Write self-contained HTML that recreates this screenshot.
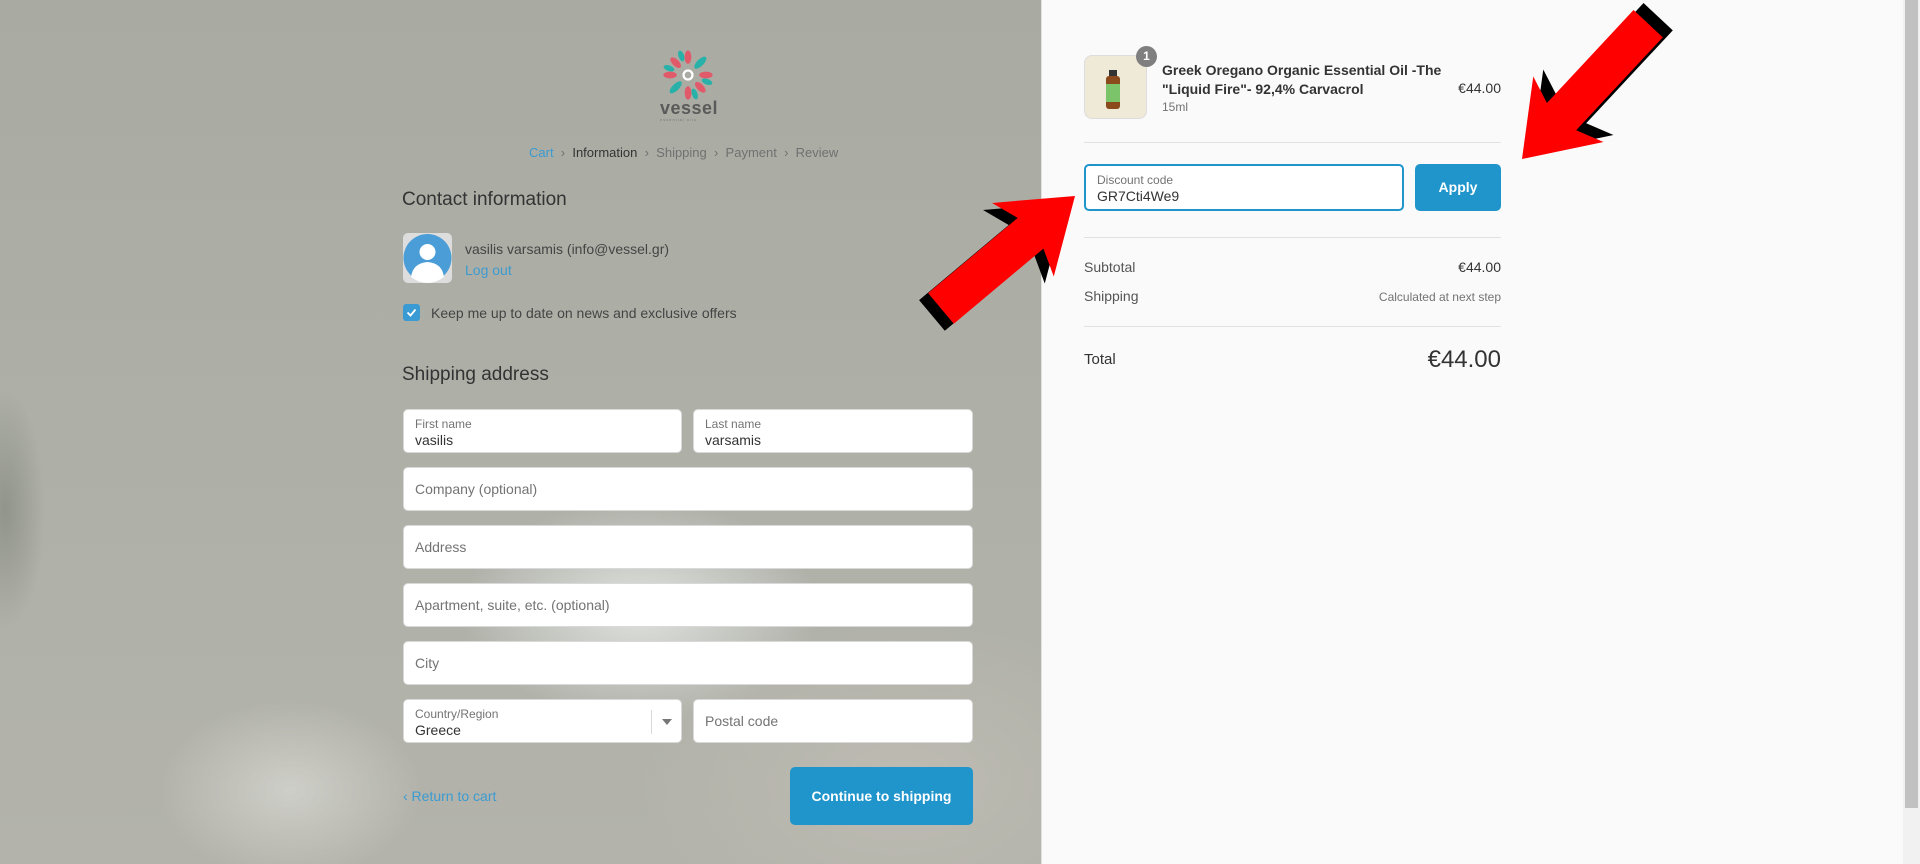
<!DOCTYPE html>
<html><head><meta charset="utf-8"><style>
*{box-sizing:border-box;margin:0;padding:0}
body{width:1920px;height:864px;overflow:hidden;font-family:"Liberation Sans",sans-serif;position:relative;background:#fafafa}
.left{position:absolute;left:0;top:0;width:1041px;height:864px;background:
radial-gradient(ellipse 180px 110px at 640px 610px,rgba(235,238,236,.8),rgba(235,238,236,0)),
radial-gradient(ellipse 130px 90px at 290px 790px,rgba(225,225,220,.6),rgba(225,225,220,0)),
radial-gradient(ellipse 260px 160px at 900px 780px,rgba(200,195,185,.5),rgba(200,195,185,0)),
radial-gradient(ellipse 40px 120px at 5px 510px,rgba(90,95,85,.35),rgba(90,95,85,0)),
linear-gradient(180deg,#a9aba3 0%,#aeb0a8 50%,#b3b3ab 100%)}
.right{position:absolute;left:1041px;top:0;width:862px;height:864px;background:#fafafa;border-left:1px solid #e1e1e1}
.sb{position:absolute;left:1903px;top:0;width:17px;height:864px;background:#f1f1f1}
.sb div{position:absolute;left:2px;top:0;width:13px;height:808px;background:#c1c1c1}
.a{position:absolute;white-space:nowrap}
.f{position:absolute;background:#fff;border:1px solid #d9d9d9;border-radius:5px;height:44px}
.f .l{position:absolute;left:11px;top:7px;font-size:12px;color:#737373}
.f .v{position:absolute;left:11px;top:22px;font-size:14px;color:#333}
.f .p{position:absolute;left:11px;top:13px;font-size:14px;color:#737373}
.hr{position:absolute;left:1084px;width:417px;height:1px;background:#e1e1e1}
</style></head><body>
<div class="left"></div>
<div class="right"></div>
<div class="sb"><div></div></div>

<svg class="a" style="left:660px;top:47px" width="56" height="56" viewBox="-25 -25 50 50">
<g fill="#e05a6a"><ellipse cx="0" cy="-16" rx="3" ry="6"/><ellipse cx="0" cy="16" rx="3" ry="6"/><ellipse cx="-16" cy="0" rx="6" ry="3"/><ellipse cx="16" cy="0" rx="6" ry="3"/>
<ellipse cx="-11" cy="-11" rx="3" ry="6" transform="rotate(-45 -11 -11)"/><ellipse cx="11" cy="11" rx="3" ry="6" transform="rotate(-45 11 11)"/></g>
<g fill="#27b1a8"><ellipse cx="11" cy="-11" rx="3" ry="7" transform="rotate(45 11 -11)"/><ellipse cx="-11" cy="11" rx="3" ry="7" transform="rotate(45 -11 11)"/>
<ellipse cx="-6" cy="-17" rx="2.5" ry="5" transform="rotate(-20 -6 -17)"/><ellipse cx="6" cy="17" rx="2.5" ry="5" transform="rotate(-20 6 17)"/>
<ellipse cx="17" cy="6" rx="5" ry="2.5" transform="rotate(20 17 6)"/><ellipse cx="-17" cy="-6" rx="5" ry="2.5" transform="rotate(20 -17 -6)"/></g>
<circle r="4" fill="none" stroke="#fff" stroke-width="2"/></svg>
<div class="a" style="left:660px;top:98px;font-size:18px;font-weight:bold;color:#5a5a5a;letter-spacing:.5px">vessel</div>
<div class="a" style="left:660px;top:117px;font-size:4px;color:#777;letter-spacing:1px">essential oils</div>

<div class="a" style="left:529px;top:145px;font-size:13px;color:#707070">
<span style="color:#3b9bd0">Cart</span> &nbsp;›&nbsp; <span style="color:#333">Information</span> &nbsp;›&nbsp; Shipping &nbsp;›&nbsp; Payment &nbsp;›&nbsp; Review</div>

<div class="a" style="left:402px;top:189px;font-size:19px;color:#333">Contact information</div>
<div class="a" style="left:403px;top:233px;width:49px;height:50px;border-radius:5px;background:#ddd;overflow:hidden">
<svg width="49" height="50" viewBox="0 0 49 50"><circle cx="24.5" cy="25" r="24" fill="#4a9dd6"/><circle cx="24.5" cy="19" r="8" fill="#fff"/><path d="M8 44 Q10 30 24.5 29 Q39 30 41 44 Q33 50 24.5 50 Q16 50 8 44Z" fill="#fff"/></svg></div>
<div class="a" style="left:465px;top:241px;font-size:14px;color:#444">vasilis varsamis (info@vessel.gr)</div>
<div class="a" style="left:465px;top:262px;font-size:14px;color:#3b9bd0">Log out</div>
<div class="a" style="left:403px;top:304px;width:17px;height:17px;border-radius:3px;background:#3a9ad3"><svg width="17" height="17"><path d="M4.5 8.5 L7.5 11.5 L12.5 5.5" stroke="#fff" stroke-width="1.8" fill="none"/></svg></div>
<div class="a" style="left:431px;top:305px;font-size:14px;color:#444">Keep me up to date on news and exclusive offers</div>

<div class="a" style="left:402px;top:364px;font-size:19px;color:#333">Shipping address</div>
<div class="f" style="left:403px;top:409px;width:279px"><div class="l">First name</div><div class="v">vasilis</div></div>
<div class="f" style="left:693px;top:409px;width:280px"><div class="l">Last name</div><div class="v">varsamis</div></div>
<div class="f" style="left:403px;top:467px;width:570px"><div class="p">Company (optional)</div></div>
<div class="f" style="left:403px;top:525px;width:570px"><div class="p">Address</div></div>
<div class="f" style="left:403px;top:583px;width:570px"><div class="p">Apartment, suite, etc. (optional)</div></div>
<div class="f" style="left:403px;top:641px;width:570px"><div class="p">City</div></div>
<div class="f" style="left:403px;top:699px;width:279px"><div class="l">Country/Region</div><div class="v">Greece</div>
<div style="position:absolute;left:247px;top:10px;width:1px;height:24px;background:#d9d9d9"></div>
<div style="position:absolute;left:258px;top:19px;border:5px solid transparent;border-top:6px solid #777"></div></div>
<div class="f" style="left:693px;top:699px;width:280px"><div class="p">Postal code</div></div>

<div class="a" style="left:403px;top:788px;font-size:14px;color:#3b9bd0">‹ Return to cart</div>
<div class="a" style="left:790px;top:767px;width:183px;height:58px;border-radius:5px;background:#1f95cc;color:#fff;font-size:14px;font-weight:bold;text-align:center;line-height:58px">Continue to shipping</div>

<div class="a" style="left:1084px;top:55px;width:63px;height:64px;border-radius:8px;border:1px solid #ddd;background:#efe9d8">
<div style="position:absolute;left:24px;top:14px;width:8px;height:7px;background:#333"></div>
<div style="position:absolute;left:21px;top:20px;width:14px;height:33px;border-radius:3px;background:#8a4a1c"></div>
<div style="position:absolute;left:21px;top:28px;width:14px;height:18px;background:#7cc46a"></div></div>
<div class="a" style="left:1136px;top:46px;width:21px;height:21px;border-radius:50%;background:#7f7f7f;color:#fff;font-size:12px;font-weight:bold;text-align:center;line-height:21px">1</div>
<div class="a" style="left:1162px;top:61px;font-size:14px;font-weight:bold;color:#333;line-height:19px">Greek Oregano Organic Essential Oil -The<br>"Liquid Fire"- 92,4% Carvacrol</div>
<div class="a" style="left:1162px;top:100px;font-size:12px;color:#737373">15ml</div>
<div class="a" style="left:1440px;top:80px;width:61px;text-align:right;font-size:14px;color:#333">€44.00</div>
<div class="hr" style="top:142px"></div>
<div class="a" style="left:1084px;top:164px;width:320px;height:47px;border:2px solid #1f95cc;border-radius:5px;background:#fff">
<div style="position:absolute;left:11px;top:7px;font-size:12px;color:#737373">Discount code</div>
<div style="position:absolute;left:11px;top:22px;font-size:14px;color:#333">GR7Cti4We9</div></div>
<div class="a" style="left:1415px;top:164px;width:86px;height:47px;border-radius:5px;background:#1f95cc;color:#fff;font-size:14px;font-weight:bold;text-align:center;line-height:47px">Apply</div>
<div class="hr" style="top:237px"></div>
<div class="a" style="left:1084px;top:259px;font-size:14px;color:#545454">Subtotal</div>
<div class="a" style="left:1400px;top:259px;width:101px;text-align:right;font-size:14px;color:#333">€44.00</div>
<div class="a" style="left:1084px;top:288px;font-size:14px;color:#545454">Shipping</div>
<div class="a" style="left:1350px;top:290px;width:151px;text-align:right;font-size:12px;color:#737373">Calculated at next step</div>
<div class="hr" style="top:326px"></div>
<div class="a" style="left:1084px;top:351px;font-size:15px;color:#333">Total</div>
<div class="a" style="left:1400px;top:346px;width:101px;text-align:right;font-size:24px;color:#333">€44.00</div>

<svg class="a" style="left:0;top:0" width="1920" height="864">
<g transform="translate(10,-7)"><g transform="translate(1522,159) rotate(133)">
<polygon points="0,0 -68,-48 -58,-20 -185,-20 -185,20 -58,20 -68,48" fill="#000"/></g></g>
<g transform="translate(1522,159) rotate(133)">
<polygon points="0,0 -68,-48 -58,-20 -185,-20 -185,20 -58,20 -68,48" fill="#f00"/></g>
<g transform="translate(-9,7)"><g transform="translate(1075,196) rotate(-40)">
<polygon points="0,0 -68,-48 -58,-20 -175,-20 -175,20 -58,20 -68,48" fill="#000"/></g></g>
<g transform="translate(1075,196) rotate(-40)">
<polygon points="0,0 -68,-48 -58,-20 -175,-20 -175,20 -58,20 -68,48" fill="#f00"/></g>
</svg>
</body></html>
